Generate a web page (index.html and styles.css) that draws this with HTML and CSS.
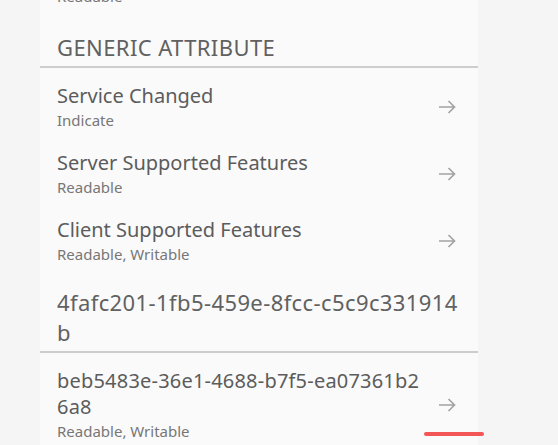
FILE: index.html
```html
<!DOCTYPE html>
<html lang="en">
<head>
<meta charset="utf-8">
<title>Services</title>
<link rel="stylesheet" href="styles.css">
</head>
<body>
<main class="screen">
  <section class="panel">
    <ul class="chars chars-top">
      <li class="char">
        <div class="char-text">
          <div class="char-name">Appearance</div>
          <div class="char-props">Readable</div>
        </div>
      </li>
    </ul>

    <div class="service">
      <h2 class="service-name">GENERIC ATTRIBUTE</h2>
      <ul class="chars">
        <li class="char">
          <div class="char-text">
            <div class="char-name">Service Changed</div>
            <div class="char-props">Indicate</div>
          </div>
          <svg class="arrow" viewBox="0 0 18 14" aria-hidden="true"><path d="M1 7H16.5M10.5 1L16.5 7L10.5 13"/></svg>
        </li>
        <li class="char">
          <div class="char-text">
            <div class="char-name">Server Supported Features</div>
            <div class="char-props">Readable</div>
          </div>
          <svg class="arrow" viewBox="0 0 18 14" aria-hidden="true"><path d="M1 7H16.5M10.5 1L16.5 7L10.5 13"/></svg>
        </li>
        <li class="char">
          <div class="char-text">
            <div class="char-name">Client Supported Features</div>
            <div class="char-props">Readable, Writable</div>
          </div>
          <svg class="arrow" viewBox="0 0 18 14" aria-hidden="true"><path d="M1 7H16.5M10.5 1L16.5 7L10.5 13"/></svg>
        </li>
      </ul>
    </div>

    <div class="service">
      <h2 class="service-name">4fafc201-1fb5-459e-8fcc-c5c9c331914b</h2>
      <ul class="chars">
        <li class="char">
          <div class="char-text">
            <div class="char-name uuid">beb5483e-36e1-4688-b7f5-ea07361b26a8</div>
            <div class="char-props">Readable, Writable</div>
          </div>
          <svg class="arrow" viewBox="0 0 18 14" aria-hidden="true"><path d="M1 7H16.5M10.5 1L16.5 7L10.5 13"/></svg>
        </li>
      </ul>
    </div>
  </section>
  <div class="home-bar"></div>
</main>
</body>
</html>
```

FILE: styles.css
```css
* { box-sizing: border-box; }

html, body {
  margin: 0;
  padding: 0;
  height: 100%;
  overflow: hidden;
}

body {
  background: #f5f5f5;
  font-family: "Noto Sans", Roboto, "Liberation Sans", sans-serif;
}

.screen {
  position: relative;
  height: 445px;
  overflow: hidden;
}

.panel {
  margin: -53px 0 0 40px;
  width: 438px;
  background: #fafafa;
  min-height: 520px;
}

.chars {
  list-style: none;
  margin: 0;
  padding: 0;
}

.chars-top .char {
  padding-bottom: 10px;
}

.service-name {
  margin: 0 0 3px;
  padding: 15px 16px 4px 17px;
  font-size: 22px;
  font-weight: 400;
  line-height: 30px;
  letter-spacing: 0.4px;
  color: #616161;
  border-bottom: 2px solid #cdcdcd;
  word-break: break-all;
}

.char {
  display: flex;
  align-items: center;
  padding: 12px 22px 7px 17px;
  gap: 14px;
}

.char-text {
  flex: 1;
  min-width: 0;
  word-break: break-all;
}

.char-name {
  font-size: 20px;
  line-height: 26px;
  color: #5c5c5c;
}

.char-name.uuid {
  letter-spacing: 0.2px;
}

.char-props {
  font-size: 15px;
  line-height: 22px;
  color: #777777;
}

.arrow {
  width: 18px;
  height: 14px;
  flex: none;
  fill: none;
  stroke: #a3a3a3;
  stroke-width: 1.7;
}

.home-bar {
  position: absolute;
  left: 424px;
  top: 432px;
  width: 60px;
  height: 4px;
  border-radius: 2px;
  background: #f25656;
}
```
